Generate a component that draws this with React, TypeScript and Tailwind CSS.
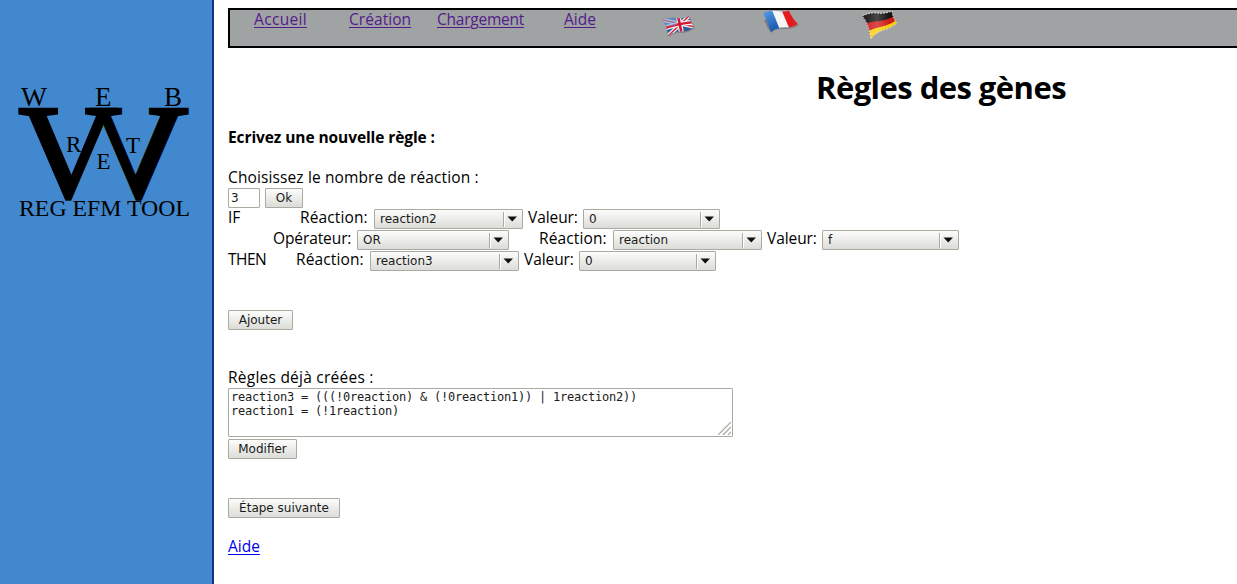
import React from "react";

const BEVEL =
  "box-border h-5 shrink-0 rounded-[1px] border border-[#a9aaa0] bg-linear-to-b from-[#fcfcfb] to-[#dcddd8] font-['DejaVu_Sans',sans-serif] text-[12px] leading-[18px] text-[#1a1a1a]";

function Button({ children, className }: { children: React.ReactNode; className: string }) {
  return (
    <button type="button" className={`${BEVEL} block whitespace-nowrap text-center ${className}`}>
      {children}
    </button>
  );
}

function Select({ value, className }: { value: string; className: string }) {
  return (
    <div className={`grid shrink-0 ${className}`}>
      <select className={`${BEVEL} col-start-1 row-start-1 w-full appearance-none pl-[5px]`} defaultValue={value}>
        <option>{value}</option>
      </select>
      <svg className="pointer-events-none col-start-1 row-start-1 justify-self-end" width="20" height="20" viewBox="0 0 20 20">
        <path d="M0.5 3V18" stroke="#a9aaa0" />
        <path d="M1.5 3V18" stroke="#fff" />
        <path d="M4.5 7.5H14L9.25 12.5Z" fill="#111" />
      </svg>
    </div>
  );
}

function Label({ children, className }: { children: React.ReactNode; className: string }) {
  return <span className={`block shrink-0 whitespace-nowrap leading-4 ${className}`}>{children}</span>;
}

function Logo() {
  return (
    <svg width="212" height="240" viewBox="0 0 212 240" fontFamily="'Liberation Serif', serif" fill="#000">
      <g fontSize="134" stroke="#000" strokeWidth="3.4">
        <text x="18.5" y="197" textLength="99" lengthAdjust="spacingAndGlyphs">V</text>
        <text x="-188.500" y="197" textLength="99" lengthAdjust="spacingAndGlyphs" transform="scale(-1 1)">V</text>
      </g>
      <g fontSize="27">
        <text x="21" y="106" textLength="26" lengthAdjust="spacingAndGlyphs">W</text>
        <text x="95" y="106">E</text>
        <text x="164" y="106">B</text>
      </g>
      <g fontSize="23">
        <text x="66" y="152">R</text>
        <text x="126" y="153">T</text>
        <text x="96.5" y="169">E</text>
      </g>
      <text x="19" y="216" fontSize="22.5" textLength="171" lengthAdjust="spacingAndGlyphs">REG EFM TOOL</text>
    </svg>
  );
}

function FlagUK() {
  return (
    <svg width="34" height="26" viewBox="0 0 34 26">
      <defs>
        <clipPath id="uk"><path d="M0 9Q7 6 14 7Q22 8 26 5Q28 13 31 16Q25 21 18 20.500Q12 20 5 25Q4 16 0 9Z" /></clipPath>
      </defs>
      <path d="M2 10Q7 7 14 8Q22 9 27 6Q29 13 32 17Q25 22 18 22Q12 21 6 26Z" fill="#666" opacity=".5" />
      <g clipPath="url(#uk)">
        <path d="M0 0H34V26H0Z" fill="#315b9b" />
        <path d="M0 9L32 16M5 25L27 4" stroke="#eee" strokeWidth="4" />
        <path d="M0 9L32 16M5 25L27 4" stroke="#d22b3c" strokeWidth="1.5" />
        <path d="M15 5L19 24M2 17Q13 13 31 11" stroke="#f4f4f4" strokeWidth="5" fill="none" />
        <path d="M15 5L19 24M2 17Q13 13 31 11" stroke="#d31630" strokeWidth="2.6" fill="none" />
        <path d="M0 4H14V14L2 16Z" fill="#7fa3d4" opacity=".6" />
      </g>
    </svg>
  );
}

function FlagFR() {
  return (
    <svg width="38" height="24" viewBox="0 0 38 24">
      <defs>
        <linearGradient id="frb" x2="1" y2="1"><stop stopColor="#5ca0e8" /><stop offset=".6" stopColor="#1556b0" /></linearGradient>
        <clipPath id="fr"><path d="M1 3Q8 0 15 1Q22 2 27 .5Q30 8 36 14Q30 18 23 17.500Q14 17 9 22Q6 13 1 3Z" /></clipPath>
      </defs>
      <path d="M2 10Q5 18 9 23Q14 18 23 19Q31 19 37 15L30 9Z" fill="#666" opacity=".6" />
      <g clipPath="url(#fr)">
        <path d="M0 0H38V24H0Z" fill="url(#frb)" />
        <path d="M10 0L18 20H38V0Z" fill="#f6f4f4" />
        <path d="M19.500 0L28 20H38V0Z" fill="#e21c1c" />
      </g>
    </svg>
  );
}

function FlagDE() {
  return (
    <svg width="38" height="32" viewBox="0 0 38 32">
      <defs>
        <clipPath id="de"><path d="M0 6Q8 2 15 3Q23 4 30 1Q31 8 35 13Q29 18 22 20Q14 22 9 29Q7 15 0 6Z" /></clipPath>
        <linearGradient id="deshine" x2="1"><stop stopColor="#fff" stopOpacity="0" /><stop offset=".4" stopColor="#fff" stopOpacity=".22" /><stop offset=".7" stopColor="#fff" stopOpacity="0" /></linearGradient>
      </defs>
      <g clipPath="url(#de)">
        <path d="M0 0H38V32H0Z" fill="#171514" />
        <path d="M2 14Q10 11 18 11Q26 10 34 5L38 32H3Z" fill="#cf1b1a" />
        <path d="M5 22Q12 18 20 16.500Q28 15 36 9V32H6Z" fill="#f8ce08" />
        <path d="M0 0H38V32H0Z" fill="url(#deshine)" />
      </g>
      <path d="M.5 6Q8 2 15 3Q23 4 30 1Q31 8 35 13Q29 18 22 20Q14 22 9 29Q7 15 .5 6Z" fill="none" stroke="#fff" strokeWidth=".8" strokeDasharray="2 1" />
    </svg>
  );
}

const NAV_LINK = "block whitespace-nowrap underline decoration-1 underline-offset-2";

export default function App() {
  return (
    <div className="flex h-[584px] w-full overflow-hidden bg-white font-['Open_Sans',sans-serif] text-[15.5px] text-black">
      <aside className="w-[214px] shrink-0 border-r-2 border-[#1c2c80] bg-[#4288ce]">
        <Logo />
      </aside>
      <main className="w-[1440px] shrink-0 pl-[14px] pt-2">
        <nav className="flex h-10 items-start border-2 border-black bg-[#9fa3a3] pl-6 text-[#551a8b]">
          <div className="w-[95px] shrink-0"><a href="#accueil" className={`${NAV_LINK} w-[53px] leading-[19px] tracking-[0.33px]`}>Accueil</a></div>
          <div className="w-[88px] shrink-0"><a href="#creation" className={`${NAV_LINK} w-[62px] leading-[19px] tracking-[0.06px]`}>Création</a></div>
          <div className="w-[127px] shrink-0"><a href="#chargement" className={`${NAV_LINK} w-[87px] leading-[19px] tracking-[-0.24px]`}>Chargement</a></div>
          <div className="w-[99px] shrink-0"><a href="#aide" className={`${NAV_LINK} w-8 leading-[19px]`}>Aide</a></div>
          <div className="w-[99px] shrink-0 pt-px"><FlagUK /></div>
          <div className="w-[100px] shrink-0"><FlagFR /></div>
          <div><FlagDE /></div>
        </nav>
        <h1 className="mt-[19px] h-[60px] text-center text-[31px] font-bold leading-10 tracking-[-0.55px]">Règles des gènes</h1>
        <p className="h-10 font-bold leading-[21px] tracking-[-0.09px]">Ecrivez une nouvelle règle :</p>
        <p className="h-[21px] leading-[21px] tracking-[0.12px]">Choisissez le nombre de réaction :</p>
        <div className="flex h-[21px] gap-[5px]">
          <input defaultValue="3" className="h-5 w-8 rounded-[1px] border border-[#a9aaa0] bg-white px-[2px] font-['DejaVu_Sans',sans-serif] text-[12px] text-[#1a1a1a]" />
          <Button className="w-[38px]">Ok</Button>
        </div>
        <div className="flex h-[21px] items-start">
          <Label className="w-[72px] tracking-[-0.2px]">IF</Label>
          <Label className="w-[74px] tracking-[0.12px]">Réaction:</Label>
          <Select value="reaction2" className="mr-[5px] w-[149px]" />
          <Label className="w-[55px] tracking-[-0.08px]">Valeur:</Label>
          <Select value="0" className="w-[137px]" />
        </div>
        <div className="flex h-[21px] items-start pl-[45px]">
          <Label className="w-[84px] tracking-[-0.1px]">Opérateur:</Label>
          <Select value="OR" className="mr-[30px] w-[152px]" />
          <Label className="w-[74px] tracking-[0.12px]">Réaction:</Label>
          <Select value="reaction" className="mr-[5px] w-[149px]" />
          <Label className="w-[55px] tracking-[-0.08px]">Valeur:</Label>
          <Select value="f" className="w-[137px]" />
        </div>
        <div className="flex h-[21px] items-start">
          <Label className="w-[68px] tracking-[-0.5px]">THEN</Label>
          <Label className="w-[74px] tracking-[0.12px]">Réaction:</Label>
          <Select value="reaction3" className="mr-[5px] w-[149px]" />
          <Label className="w-[55px] tracking-[-0.08px]">Valeur:</Label>
          <Select value="0" className="w-[137px]" />
        </div>
        <Button className="mt-[38px] w-[65px]">Ajouter</Button>
        <p className="mt-[37px] h-[21px] leading-[21px] tracking-[0.24px]">Règles déjà créées :</p>
        <div className="grid h-[49px] w-[505px]">
          <textarea
            className="col-start-1 row-start-1 h-[49px] resize-none overflow-hidden rounded-[1px] border border-[#a9aaa0] bg-white px-[2px] py-px font-['DejaVu_Sans_Mono',monospace] text-[12px] leading-[14px] tracking-[-0.224px] text-[#1a1a1a]"
            defaultValue={"reaction3 = (((!0reaction) & (!0reaction1)) | 1reaction2))\nreaction1 = (!1reaction)"}
          />
          <svg className="pointer-events-none col-start-1 row-start-1 mb-[2px] mr-[2px] self-end justify-self-end" width="13" height="13" viewBox="0 0 13 13" stroke="#a3a49a" strokeWidth="1.2">
            <path d="M0 13L13 0M5 13L13 5M10 13L13 10" />
          </svg>
        </div>
        <Button className="mt-[2px] w-[69px]">Modifier</Button>
        <Button className="mt-[39px] w-[112px]">Étape suivante</Button>
        <a href="#aide" className="mt-[18px] block w-8 leading-[21px] text-[#0000ee] underline decoration-1 underline-offset-2">Aide</a>
      </main>
    </div>
  );
}
